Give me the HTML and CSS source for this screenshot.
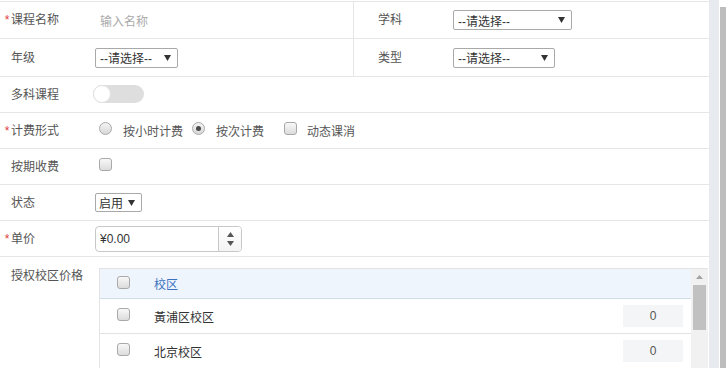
FILE: index.html
```html
<!DOCTYPE html>
<html lang="zh-CN">
<head>
<meta charset="utf-8">
<title>课程</title>
<link rel="stylesheet" href="styles.css">
</head>
<body>
<div class="page">
  <div class="form">
    <div class="row r1">
      <div class="half left">
        <div class="label"><span class="req">*</span>课程名称</div>
        <div class="placeholder">输入名称</div>
      </div>
      <div class="half right">
        <div class="label rlabel">学科</div>
        <div class="select w119"><span>--请选择--</span><svg class="caret" width="7" height="6" viewBox="0 0 7 6"><path d="M0 0h7L3.5 6z"/></svg></div>
      </div>
    </div>
    <div class="row r2">
      <div class="half left">
        <div class="label">年级</div>
        <div class="select w83"><span>--请选择--</span><svg class="caret" width="7" height="6" viewBox="0 0 7 6"><path d="M0 0h7L3.5 6z"/></svg></div>
      </div>
      <div class="half right">
        <div class="label rlabel">类型</div>
        <div class="select w102"><span>--请选择--</span><svg class="caret" width="7" height="6" viewBox="0 0 7 6"><path d="M0 0h7L3.5 6z"/></svg></div>
      </div>
    </div>
    <div class="row">
      <div class="label">多科课程</div>
      <div class="toggle"><div class="knob"></div></div>
    </div>
    <div class="row">
      <div class="label"><span class="req">*</span>计费形式</div>
      <div class="options">
        <span class="radio"></span><span class="opt">按小时计费</span>
        <span class="radio checked"><span class="dot"></span></span><span class="opt">按次计费</span>
        <span class="cb gap"></span><span class="opt">动态课消</span>
      </div>
    </div>
    <div class="row">
      <div class="label">按期收费</div>
      <div class="options"><span class="cb"></span></div>
    </div>
    <div class="row">
      <div class="label">状态</div>
      <div class="select w47 status"><span>启用</span><svg class="caret" width="7" height="6" viewBox="0 0 7 6"><path d="M0 0h7L3.5 6z"/></svg></div>
    </div>
    <div class="row">
      <div class="label"><span class="req">*</span>单价</div>
      <div class="spinner">
        <div class="spin-input">¥0.00</div>
        <div class="spin-btns">
          <svg width="7" height="5" viewBox="0 0 7 5"><path d="M3.5 0L7 5H0z"/></svg>
          <svg width="7" height="5" viewBox="0 0 7 5"><path d="M0 0h7L3.5 5z"/></svg>
        </div>
      </div>
    </div>
    <div class="row last">
      <div class="label top">授权校区价格</div>
      <div class="campus">
        <div class="ctable">
          <div class="chead">
            <div class="cbcell"><span class="cb"></span></div>
            <div class="ctitle">校区</div>
          </div>
          <div class="crow">
            <div class="cbcell"><span class="cb"></span></div>
            <div class="cname">黃浦区校区</div>
            <div class="price">0</div>
          </div>
          <div class="crow">
            <div class="cbcell"><span class="cb"></span></div>
            <div class="cname">北京校区</div>
            <div class="price">0</div>
          </div>
        </div>
        <div class="cscroll">
          <div class="up"><svg width="7" height="4" viewBox="0 0 7 4"><path d="M3.5 0L7 4H0z"/></svg></div>
          <div class="thumb"></div>
        </div>
      </div>
    </div>
  </div>
  <div class="gutter"></div>
  <div class="vbar"><div class="vthumb"></div></div>
</div>
</body>
</html>
```
FILE: styles.css
```css
html, body {
  margin: 0;
  padding: 0;
  height: 100%;
  overflow: hidden;
  background: #fff;
}
body {
  font-family: "Liberation Sans", "Noto Sans CJK SC", sans-serif;
  font-size: 12px;
  color: #555;
}
.page {
  display: flex;
  height: 368px;
}
.form {
  width: 709px;
  padding-top: 1px;
  border-top: 0;
  flex: none;
}
.gutter {
  width: 10px;
  background: #e7eaee;
  flex: none;
}
.vbar {
  width: 6px;
  border-left: 1px solid #fff;
  background: #fff;
  flex: none;
  padding-top: 7px;
}
.vthumb {
  height: 361px;
  background: #bdbdbd;
}
.row {
  display: flex;
  align-items: center;
  height: 35px;
  border-bottom: 1px solid #e6e6e6;
}
.row.r1 {
  height: 36px;
  border-top: 1px solid #e6e6e6;
}
.row.r2 {
  height: 37px;
}
.row.last {
  height: auto;
  border-bottom: 0;
  align-items: flex-start;
}
.half {
  display: flex;
  align-items: center;
  height: 100%;
}
.half.left {
  width: 353px;
  border-right: 1px solid #e6e6e6;
}
.half.right {
  flex: 1;
}
.label {
  width: 84px;
  padding-left: 11px;
  flex: none;
  line-height: 16px;
  white-space: nowrap;
}
.label.rlabel {
  width: 75px;
  padding-left: 24px;
}
.label.top {
  padding-top: 11px;
}
.req {
  display: inline-block;
  width: 8px;
  margin-left: -8px;
  color: #e23b3b;
  text-align: center;
}
.placeholder {
  margin-left: 5px;
  color: #aaa;
}
.select {
  display: flex;
  align-items: center;
  justify-content: space-between;
  box-sizing: border-box;
  height: 20px;
  border: 1px solid #a9a9a9;
  border-radius: 2px;
  padding: 0 6px 0 4px;
  color: #333;
  background: #fff;
}
.select.status {
  height: 19px;
  padding-left: 3px;
}
.w83 { width: 83px; }
.w102 { width: 102px; }
.w119 { width: 119px; }
.w47 { width: 47px; }
.caret path { fill: #333; }
.toggle {
  width: 51px;
  height: 18px;
  border-radius: 9px;
  background: #dedede;
  margin-left: -2px;
  margin-top: -2px;
}
.knob {
  width: 16px;
  height: 16px;
  border-radius: 50%;
  background: #fff;
  border: 1px solid #e2e2e2;
}
.options {
  display: flex;
  align-items: center;
  margin-left: 4px;
}
.radio {
  display: flex;
  align-items: center;
  justify-content: center;
  box-sizing: border-box;
  width: 13px;
  height: 13px;
  border-radius: 50%;
  border: 1px solid #a9a9a9;
  background: linear-gradient(#f4f4f4, #d8d8d8);
  margin-bottom: 5px;
  margin-right: 11px;
}
.dot {
  width: 5px;
  height: 5px;
  border-radius: 50%;
  background: #4a4a4a;
}
.opt {
  margin-right: 9px;
}
.cb {
  display: inline-block;
  box-sizing: border-box;
  width: 13px;
  height: 13px;
  border-radius: 3px;
  border: 1px solid #a9a9a9;
  background: linear-gradient(#f8f8f8, #dcdcdc);
  margin-bottom: 5px;
}
.cb.gap {
  margin-left: 11px;
  margin-right: 10px;
}
.spinner {
  display: flex;
  box-sizing: border-box;
  width: 147px;
  height: 26px;
  border: 1px solid #c8c8c8;
  border-radius: 4px;
  margin-top: 1px;
}
.spin-input {
  flex: 1;
  padding-left: 4px;
  line-height: 24px;
  color: #333;
}
.spin-btns {
  width: 22px;
  border-left: 1px solid #c8c8c8;
  display: flex;
  flex-direction: column;
  align-items: center;
  justify-content: center;
  gap: 4px;
  background: linear-gradient(#fff, #f4f4f4);
  border-radius: 0 3px 3px 0;
}
.spin-btns path { fill: #555; }
.campus {
  display: flex;
  margin-left: 4px;
  margin-top: 11px;
  width: 609px;
  height: 120px;
  border-top: 1px solid #e3e3e3;
  border-left: 1px solid #e3e3e3;
  box-sizing: border-box;
}
.ctable {
  flex: 1;
}
.chead {
  display: flex;
  align-items: center;
  height: 29px;
  background: #eef5fd;
  border-bottom: 1px solid #cfdde9;
}
.crow {
  display: flex;
  align-items: center;
  height: 34px;
  border-bottom: 1px solid #e3e3e3;
  color: #333;
}
.cbcell {
  width: 37px;
  padding-left: 17px;
  display: flex;
  align-items: center;
}
.chead .cb, .crow .cb {
  margin-bottom: 3px;
}
.ctitle {
  color: #3a72c0;
}
.price {
  margin-left: auto;
  margin-right: 8px;
  width: 60px;
  height: 22px;
  line-height: 22px;
  background: #f4f5f6;
  text-align: center;
  color: #555;
}
.cscroll {
  width: 17px;
  background: #f1f1f1;
  display: flex;
  flex-direction: column;
  align-items: center;
}
.up {
  height: 16px;
  display: flex;
  align-items: center;
  justify-content: center;
}
.up path { fill: #a3a3a3; }
.thumb {
  width: 13px;
  height: 45px;
  background: #c1c1c1;
}
```
